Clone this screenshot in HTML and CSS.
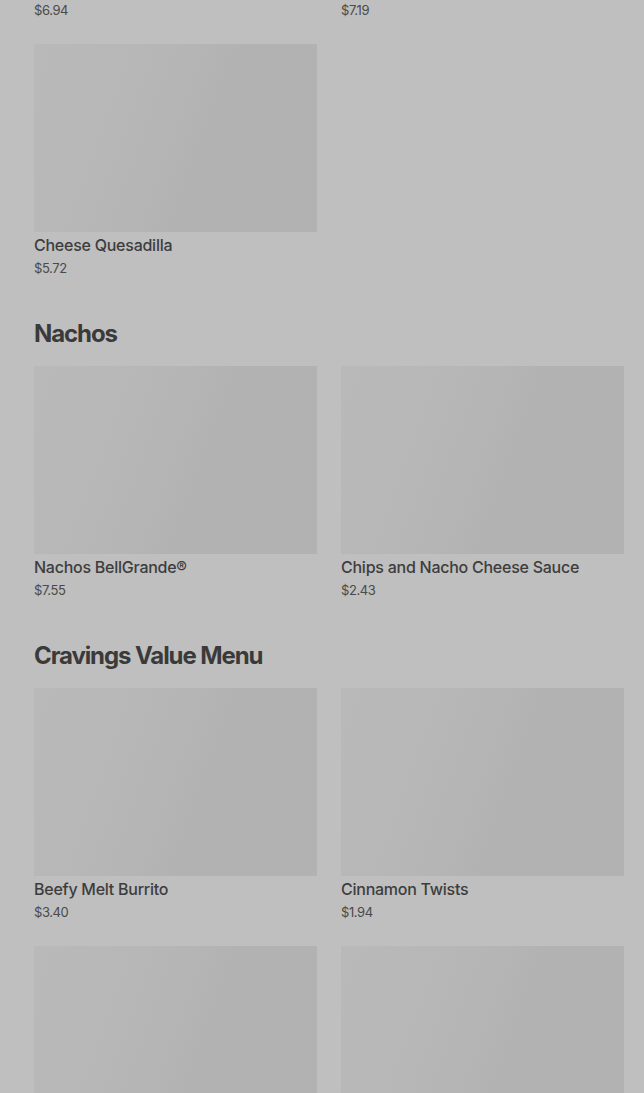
FILE: index.html
```html
<!DOCTYPE html>
<html lang="en">
<head>
<meta charset="utf-8">
<title>Menu</title>
<link rel="stylesheet" href="styles.css">
</head>
<body>
<main class="menu">
  <section class="section section-first">
    <div class="grid">
      <div class="card"><div class="thumb"></div><div class="name">Chicken Chalupa Supreme</div><div class="price">$6.94</div></div>
      <div class="card"><div class="thumb"></div><div class="name">Crunchwrap Supreme®</div><div class="price">$7.19</div></div>
      <div class="card"><div class="thumb"></div><div class="name">Cheese Quesadilla</div><div class="price">$5.72</div></div>
    </div>
  </section>
  <section class="section">
    <h2 class="heading">Nachos</h2>
    <div class="grid">
      <div class="card"><div class="thumb"></div><div class="name">Nachos BellGrande®</div><div class="price">$7.55</div></div>
      <div class="card"><div class="thumb"></div><div class="name">Chips and Nacho Cheese Sauce</div><div class="price">$2.43</div></div>
    </div>
  </section>
  <section class="section">
    <h2 class="heading">Cravings Value Menu</h2>
    <div class="grid">
      <div class="card"><div class="thumb"></div><div class="name">Beefy Melt Burrito</div><div class="price">$3.40</div></div>
      <div class="card"><div class="thumb"></div><div class="name">Cinnamon Twists</div><div class="price">$1.94</div></div>
      <div class="card"><div class="thumb"></div><div class="name">Spicy Potato Soft Taco</div><div class="price">$2.19</div></div>
      <div class="card"><div class="thumb"></div><div class="name">Cheesy Roll Up</div><div class="price">$1.49</div></div>
    </div>
  </section>
</main>
</body>
</html>
```

FILE: styles.css
```css
html, body {
  margin: 0;
  padding: 0;
  background: #bfbfbf;
  overflow: hidden;
}
body {
  font-family: Inter, "Noto Sans", sans-serif;
  color: #3d3d3d;
}
.menu {
  padding: 0 20px 0 34px;
  margin-top: -214px;
}
.section {
  padding-bottom: 40px;
}
.heading {
  margin: 0 0 16px;
  font-size: 24px;
  line-height: 32px;
  font-weight: 700;
  letter-spacing: -1.1px;
  color: #3a3a3a;
}
.grid {
  display: grid;
  grid-template-columns: 1fr 1fr;
  column-gap: 24px;
  row-gap: 24px;
}
.thumb {
  height: 188px;
  background: linear-gradient(110deg, #b9b9b9 0%, #b7b7b7 30%, #b5b5b5 45%, #b2b2b2 60%, #b2b2b2 100%);
}
.name {
  margin-top: 3px;
  font-size: 16px;
  line-height: 20px;
  font-weight: 500;
  letter-spacing: -0.25px;
  color: #3d3d3d;
}
.price {
  margin-top: 3px;
  font-size: 13px;
  line-height: 20px;
  letter-spacing: -0.4px;
  color: #4a4a4a;
}
```
